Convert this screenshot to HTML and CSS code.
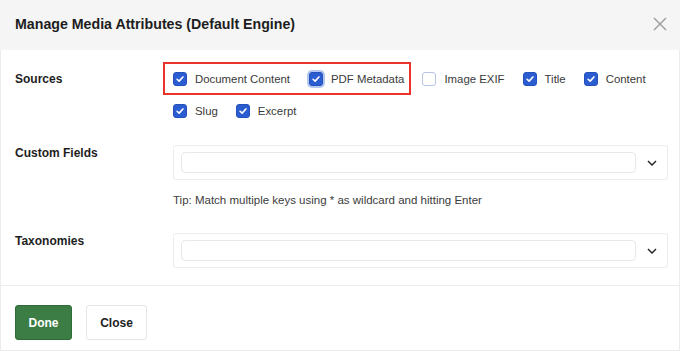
FILE: index.html
```html
<!DOCTYPE html>
<html>
<head>
<meta charset="utf-8">
<link rel="stylesheet" href="styles.css">
</head>
<body>
<div class="modal">
  <div class="header">
    <h1 class="title">Manage Media Attributes (Default Engine)</h1>
    <svg class="close-x" width="14" height="14" viewBox="0 0 14 14"><path d="M1 1 L13 13 M13 1 L1 13" stroke="#9a9a9a" stroke-width="1.4" fill="none"/></svg>
  </div>
  <div class="content">
    <div class="row sources">
      <div class="label">Sources</div>
      <div class="options">
        <div class="opt-row">
          <span class="highlight">
            <label class="opt"><span class="cb checked"><svg width="14" height="14" viewBox="0 0 14 14"><path d="M3.6 7.3 L6 9.5 L10.4 4.6" stroke="#fff" stroke-width="1.9" fill="none" stroke-linecap="round" stroke-linejoin="round"/></svg></span>Document Content</label>
            <label class="opt"><span class="cb checked focus"><svg width="14" height="14" viewBox="0 0 14 14"><path d="M3.6 7.3 L6 9.5 L10.4 4.6" stroke="#fff" stroke-width="1.9" fill="none" stroke-linecap="round" stroke-linejoin="round"/></svg></span>PDF Metadata</label>
          </span>
          <label class="opt"><span class="cb"></span>Image EXIF</label>
          <label class="opt"><span class="cb checked"><svg width="14" height="14" viewBox="0 0 14 14"><path d="M3.6 7.3 L6 9.5 L10.4 4.6" stroke="#fff" stroke-width="1.9" fill="none" stroke-linecap="round" stroke-linejoin="round"/></svg></span>Title</label>
          <label class="opt"><span class="cb checked"><svg width="14" height="14" viewBox="0 0 14 14"><path d="M3.6 7.3 L6 9.5 L10.4 4.6" stroke="#fff" stroke-width="1.9" fill="none" stroke-linecap="round" stroke-linejoin="round"/></svg></span>Content</label>
        </div>
        <div class="opt-row">
          <label class="opt"><span class="cb checked"><svg width="14" height="14" viewBox="0 0 14 14"><path d="M3.6 7.3 L6 9.5 L10.4 4.6" stroke="#fff" stroke-width="1.9" fill="none" stroke-linecap="round" stroke-linejoin="round"/></svg></span>Slug</label>
          <label class="opt"><span class="cb checked"><svg width="14" height="14" viewBox="0 0 14 14"><path d="M3.6 7.3 L6 9.5 L10.4 4.6" stroke="#fff" stroke-width="1.9" fill="none" stroke-linecap="round" stroke-linejoin="round"/></svg></span>Excerpt</label>
        </div>
      </div>
    </div>
    <div class="row custom">
      <div class="label">Custom Fields</div>
      <div class="field">
        <div class="select">
          <div class="select-input"></div>
          <div class="chev"><svg width="10" height="6" viewBox="0 0 10 6"><path d="M1 1 L5 5 L9 1" stroke="#2b2b2b" stroke-width="1.5" fill="none"/></svg></div>
        </div>
        <p class="tip">Tip: Match multiple keys using * as wildcard and hitting Enter</p>
      </div>
    </div>
    <div class="row tax">
      <div class="label">Taxonomies</div>
      <div class="field">
        <div class="select">
          <div class="select-input"></div>
          <div class="chev"><svg width="10" height="6" viewBox="0 0 10 6"><path d="M1 1 L5 5 L9 1" stroke="#2b2b2b" stroke-width="1.5" fill="none"/></svg></div>
        </div>
      </div>
    </div>
  </div>
  <div class="footer">
    <button class="btn btn-done">Done</button>
    <button class="btn btn-close">Close</button>
  </div>
</div>
</body>
</html>
```
FILE: styles.css
```css
* { box-sizing: border-box; }
html, body { margin: 0; padding: 0; background: #fff; }
body { font-family: "Liberation Sans", Arial, sans-serif; color: #1e1e1e; }

.modal {
  width: 680px;
  height: 351px;
  border: 1px solid #ececec;
  border-top: none;
  display: flex;
  flex-direction: column;
}

.header {
  height: 50px;
  background: #f5f5f5;
  display: flex;
  align-items: center;
  justify-content: space-between;
  padding: 0 13px 3px 15px;
  margin: 0 -1px;
}
.title {
  margin: 0;
  font-size: 14.2px;
  font-weight: bold;
  color: #1d1d1d;
}
.close-x { display: block; }

.content {
  padding: 21px 11px 17px 14px;
  border-bottom: 1px solid #ececec;
}

.row {
  display: grid;
  grid-template-columns: 158px 1fr;
}
.label {
  font-size: 12px;
  font-weight: bold;
  line-height: 16px;
  color: #1e1e1e;
}

.options { display: flex; flex-direction: column; gap: 16px; }
.opt-row { display: flex; align-items: center; gap: 18px; }
.highlight {
  position: relative;
  display: flex;
  align-items: center;
  gap: 19px;
}
.highlight::before {
  content: "";
  position: absolute;
  left: -10px;
  right: -7px;
  top: -9px;
  bottom: -8px;
  border: 2px solid #e8352c;
}
.opt {
  display: flex;
  align-items: center;
  gap: 8px;
  font-size: 11.4px;
  line-height: 16px;
  color: #3a3a3a;
}
.cb {
  width: 14px;
  height: 14px;
  border-radius: 3px;
  border: 1px solid #b8c4e6;
  background: #fff;
  display: flex;
  align-items: center;
  justify-content: center;
  flex: none;
}
.cb svg { display: block; }
.cb.checked {
  background: #2b5dd1;
  border-color: #2452bd;
}
.cb.focus { box-shadow: 0 0 0 2px rgba(43, 93, 209, 0.35); }

.custom { margin-top: 26px; }
.tax { margin-top: 25px; }

.select {
  height: 35px;
  border: 1px solid #ececec;
  border-radius: 3px;
  display: flex;
  align-items: center;
  padding-left: 7px;
}
.select-input {
  flex: 1;
  height: 21px;
  border: 1px solid #e8e8e8;
  border-radius: 4px;
  background: #fff;
}
.chev {
  width: 31px;
  display: flex;
  justify-content: center;
  align-items: center;
}
.chev svg { display: block; }

.tip {
  margin: 12px 0 0;
  font-size: 11.5px;
  line-height: 16px;
  color: #3c3c3c;
}

.footer {
  padding: 19px 14px 0;
  display: flex;
  gap: 14px;
  flex: 1;
}
.btn {
  height: 35px;
  border-radius: 3px;
  font-family: "Liberation Sans", Arial, sans-serif;
  font-size: 12px;
  font-weight: bold;
  cursor: pointer;
}
.btn-done {
  width: 57px;
  background: #3c7d45;
  border: 1px solid #2f6b38;
  color: #fff;
}
.btn-close {
  width: 61px;
  background: #fff;
  border: 1px solid #e6e6e6;
  color: #222;
}
```
